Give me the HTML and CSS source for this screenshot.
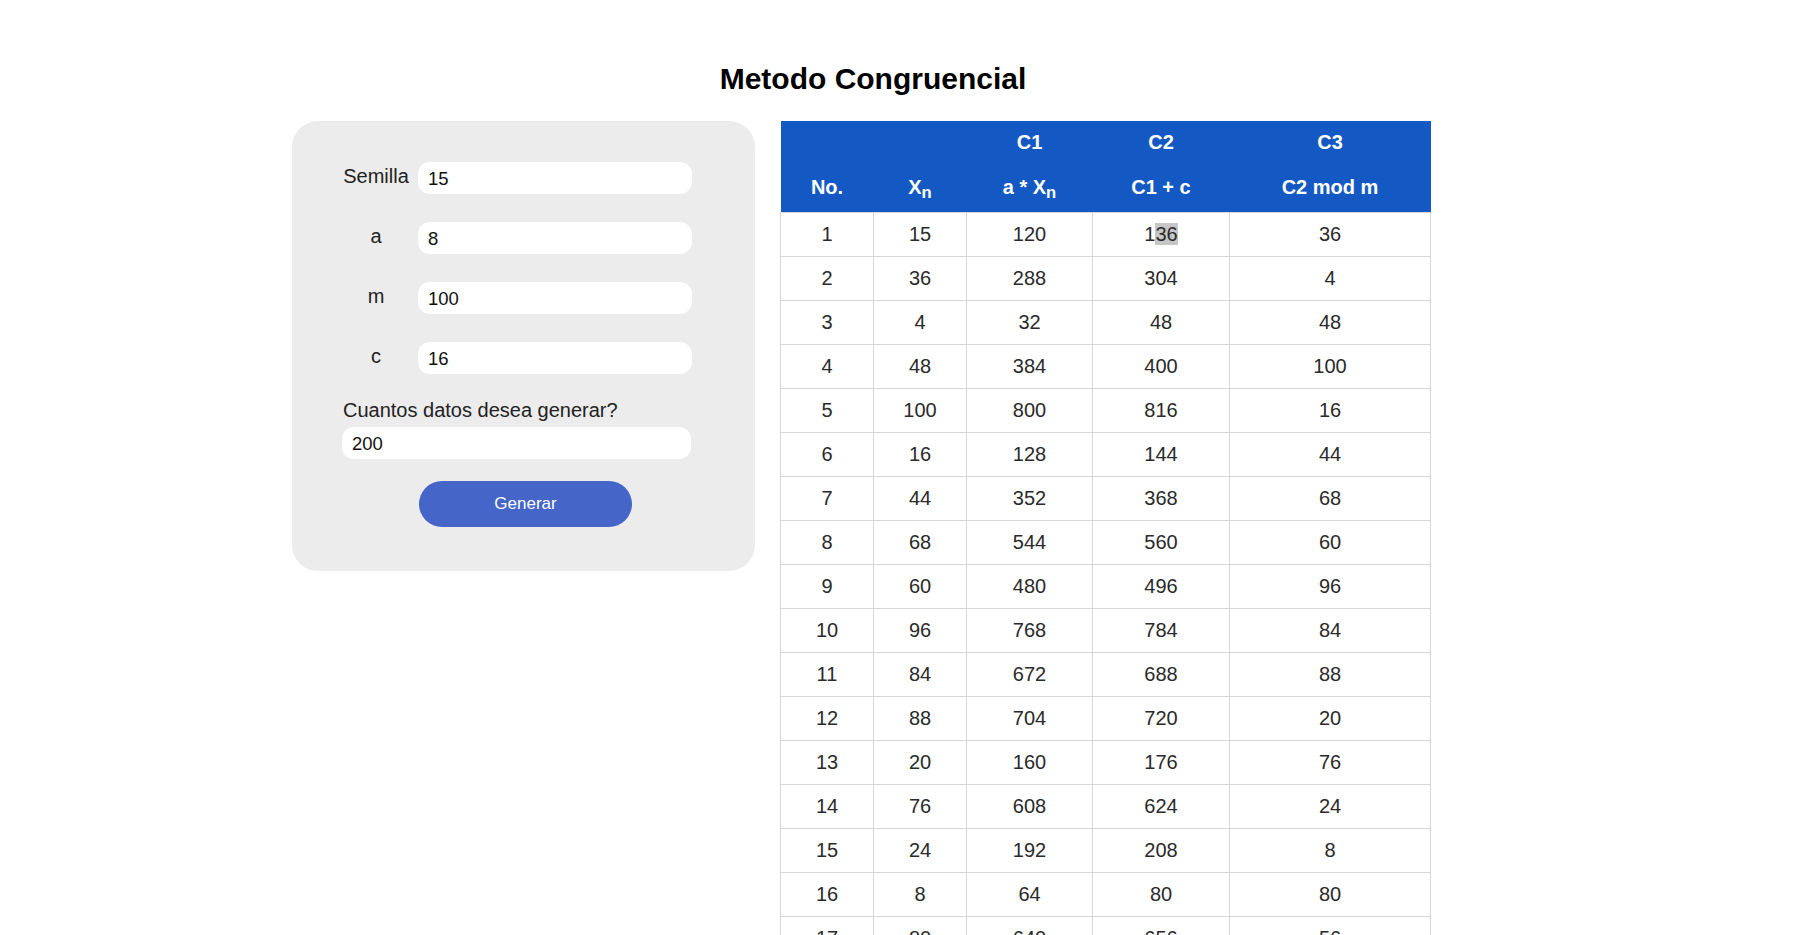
FILE: index.html
```html
<!DOCTYPE html>
<html lang="es">
<head>
<meta charset="utf-8">
<title>Metodo Congruencial</title>
<link rel="stylesheet" href="styles.css">
</head>
<body>
<div class="page">
  <h1 class="title">Metodo Congruencial</h1>
  <div class="content">
    <form class="panel">
      <div class="fields">
        <div class="field"><label class="lbl">Semilla</label><input class="inp" type="text" value="15"></div>
        <div class="field"><label class="lbl">a</label><input class="inp" type="text" value="8"></div>
        <div class="field"><label class="lbl">m</label><input class="inp" type="text" value="100"></div>
        <div class="field"><label class="lbl">c</label><input class="inp" type="text" value="16"></div>
      </div>
      <label class="question">Cuantos datos desea generar?</label>
      <input class="inp wide" type="text" value="200">
      <button class="btn" type="button">Generar</button>
    </form>
    <table class="results">
      <colgroup>
        <col class="c1"><col class="c2"><col class="c3"><col class="c4"><col class="c5">
      </colgroup>
      <thead>
        <tr class="hr1"><th></th><th></th><th>C1</th><th>C2</th><th>C3</th></tr>
        <tr class="hr2"><th>No.</th><th>X<sub>n</sub></th><th>a * X<sub>n</sub></th><th>C1 + c</th><th>C2 mod m</th></tr>
      </thead>
      <tbody>
        <tr><td>1</td><td>15</td><td>120</td><td>1<span class="sel">36</span></td><td>36</td></tr>
        <tr><td>2</td><td>36</td><td>288</td><td>304</td><td>4</td></tr>
        <tr><td>3</td><td>4</td><td>32</td><td>48</td><td>48</td></tr>
        <tr><td>4</td><td>48</td><td>384</td><td>400</td><td>100</td></tr>
        <tr><td>5</td><td>100</td><td>800</td><td>816</td><td>16</td></tr>
        <tr><td>6</td><td>16</td><td>128</td><td>144</td><td>44</td></tr>
        <tr><td>7</td><td>44</td><td>352</td><td>368</td><td>68</td></tr>
        <tr><td>8</td><td>68</td><td>544</td><td>560</td><td>60</td></tr>
        <tr><td>9</td><td>60</td><td>480</td><td>496</td><td>96</td></tr>
        <tr><td>10</td><td>96</td><td>768</td><td>784</td><td>84</td></tr>
        <tr><td>11</td><td>84</td><td>672</td><td>688</td><td>88</td></tr>
        <tr><td>12</td><td>88</td><td>704</td><td>720</td><td>20</td></tr>
        <tr><td>13</td><td>20</td><td>160</td><td>176</td><td>76</td></tr>
        <tr><td>14</td><td>76</td><td>608</td><td>624</td><td>24</td></tr>
        <tr><td>15</td><td>24</td><td>192</td><td>208</td><td>8</td></tr>
        <tr><td>16</td><td>8</td><td>64</td><td>80</td><td>80</td></tr>
        <tr><td>17</td><td>80</td><td>640</td><td>656</td><td>56</td></tr>
        <tr><td>18</td><td>56</td><td>448</td><td>464</td><td>64</td></tr>
        <tr><td>19</td><td>64</td><td>512</td><td>528</td><td>28</td></tr>
        <tr><td>20</td><td>28</td><td>224</td><td>240</td><td>40</td></tr>
      </tbody>
    </table>
  </div>
</div>
</body>
</html>
```

FILE: styles.css
```css
html, body {
  margin: 0;
  padding: 0;
  background: #ffffff;
}

body {
  font-family: "Liberation Sans", Arial, sans-serif;
  color: #222222;
}

.page {
  width: 1162px;
  margin-left: 292px;
  padding-top: 62px;
}

.title {
  margin: 0 0 25px 0;
  font-size: 30px;
  line-height: 34px;
  font-weight: bold;
  color: #000000;
  text-align: center;
}

.content {
  display: flex;
  align-items: flex-start;
  gap: 25px;
}

.panel {
  width: 463px;
  box-sizing: border-box;
  margin: 0;
  padding: 41px 0 44px 51px;
  background: #ececec;
  border-radius: 26px;
}

.fields {
  display: flex;
  flex-direction: column;
  gap: 28px;
}

.field {
  display: flex;
  align-items: flex-start;
}

.lbl {
  width: 66px;
  margin-right: 9px;
  font-size: 20px;
  line-height: 29px;
  text-align: center;
  color: #222222;
}

.inp {
  display: block;
  width: 274px;
  height: 32px;
  box-sizing: border-box;
  margin: 0;
  padding: 1px 10px 0 10px;
  border: none;
  border-radius: 12px;
  background: #ffffff;
  font-family: "Liberation Sans", Arial, sans-serif;
  font-size: 18.5px;
  color: #111111;
  outline: none;
}

.question {
  display: block;
  margin-top: 25px;
  margin-bottom: 5px;
  font-size: 20px;
  line-height: 23px;
  color: #222222;
}

.inp.wide {
  width: 349px;
  margin-left: -1px;
}

.btn {
  display: block;
  width: 213px;
  height: 46px;
  margin: 22px 0 0 76px;
  padding: 0;
  border: none;
  border-radius: 23px;
  background: #4565c8;
  color: #ffffff;
  font-family: "Liberation Sans", Arial, sans-serif;
  font-size: 17px;
}

.results {
  width: 650px;
  table-layout: fixed;
  border-collapse: collapse;
  font-size: 20px;
}

.c1 { width: 93px; }
.c2 { width: 93px; }
.c3 { width: 126px; }
.c4 { width: 137px; }
.c5 { width: 201px; }

.results thead {
  background: #1459c3;
}

.results th {
  padding: 0;
  border: none;
  color: #ffffff;
  font-weight: bold;
  text-align: center;
  vertical-align: middle;
  line-height: 23px;
}

.hr1 th {
  height: 43px;
}

.hr2 th {
  height: 46px;
  padding-bottom: 2px;
}

.results sub {
  font-size: 0.83em;
  line-height: 0;
  vertical-align: -4px;
}

.results td {
  height: 43px;
  padding: 0;
  border: 1px solid #d6d6d6;
  text-align: center;
  vertical-align: middle;
  line-height: 23px;
  color: #2a2a2a;
}

.sel {
  background: #c6c6c6;
}
```
